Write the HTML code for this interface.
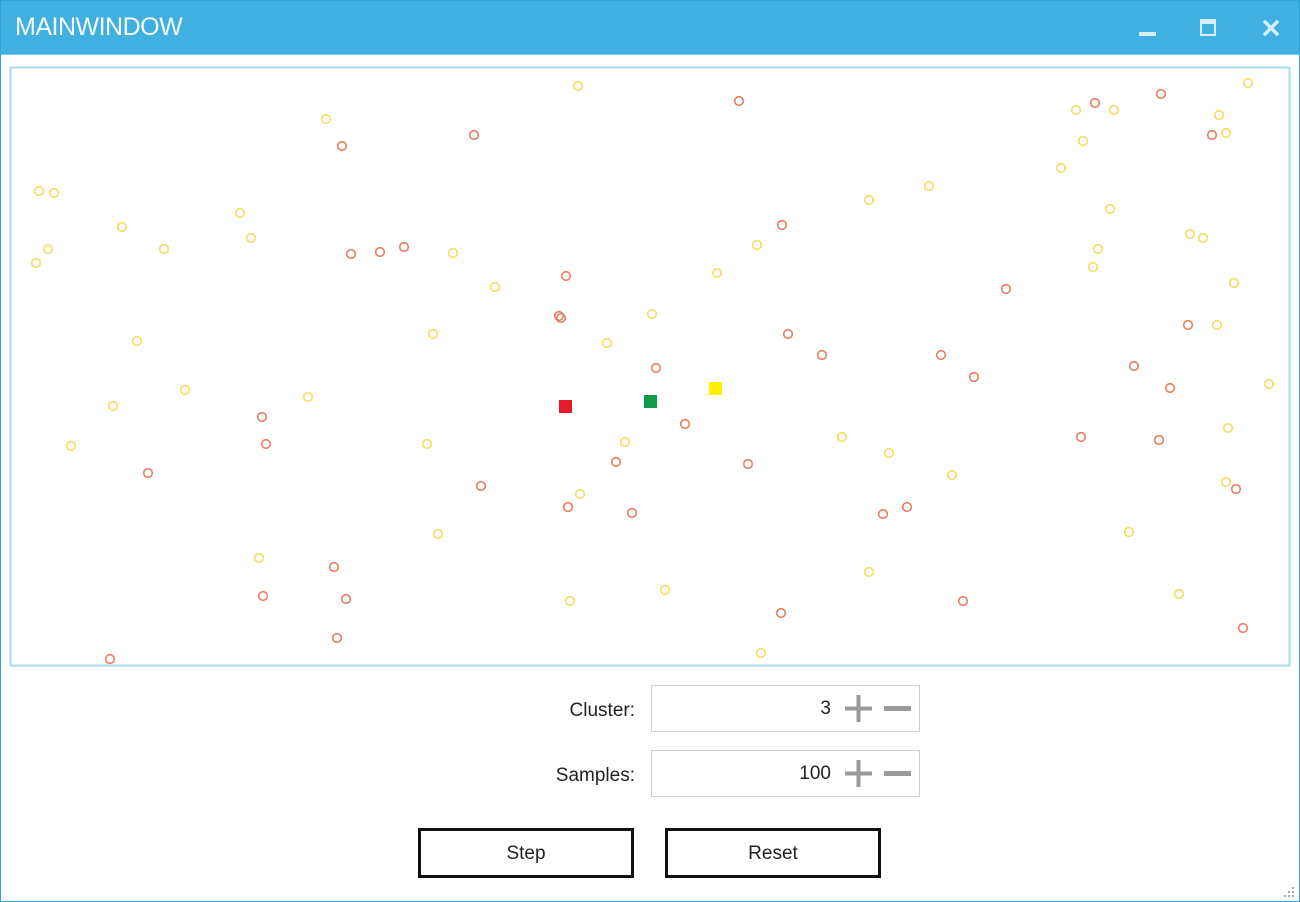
<!DOCTYPE html>
<html><head><meta charset="utf-8"><style>
body{margin:0;width:1300px;height:902px;overflow:hidden;background:#fff;font-family:"Liberation Sans",sans-serif}
.win{position:absolute;left:0;top:0;width:1298px;height:900px;border:1px solid #2ea3db;background:#fff}
.title{position:absolute;left:0;top:0;width:1298px;height:53px;background:#41b0e1;border-bottom:1px solid #7fcbea}
.title span{position:absolute;left:14px;top:12px;color:#f4fbff;font-size:25px;letter-spacing:-0.5px}
.lbl{position:absolute;font-size:19px;color:#222;text-align:right;width:200px}
.box{position:absolute;left:650px;width:267px;height:45px;border:1px solid #d0d0d0}
.val{position:absolute;right:88px;top:12px;font-size:19px;color:#222}
.btn{position:absolute;top:827px;width:210px;height:44px;border:3px solid #111;font-size:19px;text-align:center;line-height:46px;color:#222}
</style></head><body>
<div class="win">
<div class="title"><span>MAINWINDOW</span>
<svg width="1298" height="53" style="position:absolute;left:0;top:0">
<rect x="1138" y="31" width="17" height="4" fill="#d6eef9"/>
<rect x="1200" y="19" width="14" height="15" fill="none" stroke="#d6eef9" stroke-width="2"/><rect x="1200" y="19" width="14" height="4" fill="#d6eef9"/>
<path d="M1263 20 L1277 34 M1277 20 L1263 34" stroke="#d6eef9" stroke-width="3.5"/>
</svg></div>
<svg width="1300" height="902" style="position:absolute;left:-1px;top:-1px">
<rect x="10.5" y="67.5" width="1279" height="598" fill="none" stroke="#a9dbef" stroke-width="2"/>
<g fill="none" stroke="#f5dc5e" stroke-width="1.6">
<circle cx="578" cy="86" r="4.3"/><circle cx="326" cy="119" r="4.3"/><circle cx="1248" cy="83" r="4.3"/><circle cx="1076" cy="110" r="4.3"/><circle cx="1114" cy="110" r="4.3"/><circle cx="1219" cy="115" r="4.3"/><circle cx="1226" cy="133" r="4.3"/><circle cx="1083" cy="141" r="4.3"/><circle cx="39" cy="191" r="4.3"/><circle cx="54" cy="193" r="4.3"/><circle cx="929" cy="186" r="4.3"/><circle cx="869" cy="200" r="4.3"/><circle cx="1061" cy="168" r="4.3"/><circle cx="240" cy="213" r="4.3"/><circle cx="122" cy="227" r="4.3"/><circle cx="1110" cy="209" r="4.3"/><circle cx="251" cy="238" r="4.3"/><circle cx="164" cy="249" r="4.3"/><circle cx="48" cy="249" r="4.3"/><circle cx="36" cy="263" r="4.3"/><circle cx="453" cy="253" r="4.3"/><circle cx="757" cy="245" r="4.3"/><circle cx="1190" cy="234" r="4.3"/><circle cx="1203" cy="238" r="4.3"/><circle cx="1098" cy="249" r="4.3"/><circle cx="1093" cy="267" r="4.3"/><circle cx="717" cy="273" r="4.3"/><circle cx="495" cy="287" r="4.3"/><circle cx="1234" cy="283" r="4.3"/><circle cx="652" cy="314" r="4.3"/><circle cx="433" cy="334" r="4.3"/><circle cx="137" cy="341" r="4.3"/><circle cx="607" cy="343" r="4.3"/><circle cx="1217" cy="325" r="4.3"/><circle cx="1269" cy="384" r="4.3"/><circle cx="185" cy="390" r="4.3"/><circle cx="308" cy="397" r="4.3"/><circle cx="113" cy="406" r="4.3"/><circle cx="71" cy="446" r="4.3"/><circle cx="427" cy="444" r="4.3"/><circle cx="625" cy="442" r="4.3"/><circle cx="842" cy="437" r="4.3"/><circle cx="889" cy="453" r="4.3"/><circle cx="1228" cy="428" r="4.3"/><circle cx="952" cy="475" r="4.3"/><circle cx="1226" cy="482" r="4.3"/><circle cx="580" cy="494" r="4.3"/><circle cx="438" cy="534" r="4.3"/><circle cx="1129" cy="532" r="4.3"/><circle cx="259" cy="558" r="4.3"/><circle cx="869" cy="572" r="4.3"/><circle cx="665" cy="590" r="4.3"/><circle cx="570" cy="601" r="4.3"/><circle cx="1179" cy="594" r="4.3"/><circle cx="761" cy="653" r="4.3"/>
</g>
<g fill="none" stroke="#eb7c5e" stroke-width="1.6">
<circle cx="739" cy="101" r="4.3"/><circle cx="1095" cy="103" r="4.3"/><circle cx="1161" cy="94" r="4.3"/><circle cx="342" cy="146" r="4.3"/><circle cx="474" cy="135" r="4.3"/><circle cx="1212" cy="135" r="4.3"/><circle cx="782" cy="225" r="4.3"/><circle cx="351" cy="254" r="4.3"/><circle cx="380" cy="252" r="4.3"/><circle cx="404" cy="247" r="4.3"/><circle cx="566" cy="276" r="4.3"/><circle cx="1006" cy="289" r="4.3"/><circle cx="559" cy="316" r="4.3"/><circle cx="561" cy="318" r="4.3"/><circle cx="1188" cy="325" r="4.3"/><circle cx="788" cy="334" r="4.3"/><circle cx="822" cy="355" r="4.3"/><circle cx="941" cy="355" r="4.3"/><circle cx="656" cy="368" r="4.3"/><circle cx="974" cy="377" r="4.3"/><circle cx="1134" cy="366" r="4.3"/><circle cx="1170" cy="388" r="4.3"/><circle cx="262" cy="417" r="4.3"/><circle cx="685" cy="424" r="4.3"/><circle cx="266" cy="444" r="4.3"/><circle cx="1081" cy="437" r="4.3"/><circle cx="1159" cy="440" r="4.3"/><circle cx="148" cy="473" r="4.3"/><circle cx="616" cy="462" r="4.3"/><circle cx="748" cy="464" r="4.3"/><circle cx="481" cy="486" r="4.3"/><circle cx="1236" cy="489" r="4.3"/><circle cx="568" cy="507" r="4.3"/><circle cx="632" cy="513" r="4.3"/><circle cx="883" cy="514" r="4.3"/><circle cx="907" cy="507" r="4.3"/><circle cx="334" cy="567" r="4.3"/><circle cx="263" cy="596" r="4.3"/><circle cx="346" cy="599" r="4.3"/><circle cx="963" cy="601" r="4.3"/><circle cx="781" cy="613" r="4.3"/><circle cx="1243" cy="628" r="4.3"/><circle cx="337" cy="638" r="4.3"/><circle cx="110" cy="659" r="4.3"/>
</g>
<rect x="559" y="400" width="13" height="13" fill="#e8192a"/>
<rect x="644" y="395" width="13" height="13" fill="#0e9a48"/>
<rect x="709" y="382" width="13" height="13" fill="#fff200"/>
<g fill="#aaa"><rect x="1284" y="895" width="2" height="2"/><rect x="1288" y="891" width="2" height="2"/><rect x="1292" y="887" width="2" height="2"/><rect x="1288" y="895" width="2" height="2"/><rect x="1292" y="891" width="2" height="2"/><rect x="1292" y="895" width="2" height="2"/></g>
</svg>
<div class="lbl" style="left:434px;top:699px">Cluster:</div>
<div class="lbl" style="left:434px;top:764px">Samples:</div>
<div class="box" style="top:684px"><span class="val">3</span>
<svg width="267" height="45" style="position:absolute;left:0;top:0"><rect x="193" y="20.5" width="27" height="4" fill="#999"/><rect x="204.5" y="9" width="4" height="27" fill="#999"/><rect x="232" y="20" width="27" height="5" fill="#999"/></svg></div>
<div class="box" style="top:749px"><span class="val">100</span>
<svg width="267" height="45" style="position:absolute;left:0;top:0"><rect x="193" y="20.5" width="27" height="4" fill="#999"/><rect x="204.5" y="9" width="4" height="27" fill="#999"/><rect x="232" y="20" width="27" height="5" fill="#999"/></svg></div>
<div class="btn" style="left:417px">Step</div>
<div class="btn" style="left:664px">Reset</div>
</div>
</body></html>
